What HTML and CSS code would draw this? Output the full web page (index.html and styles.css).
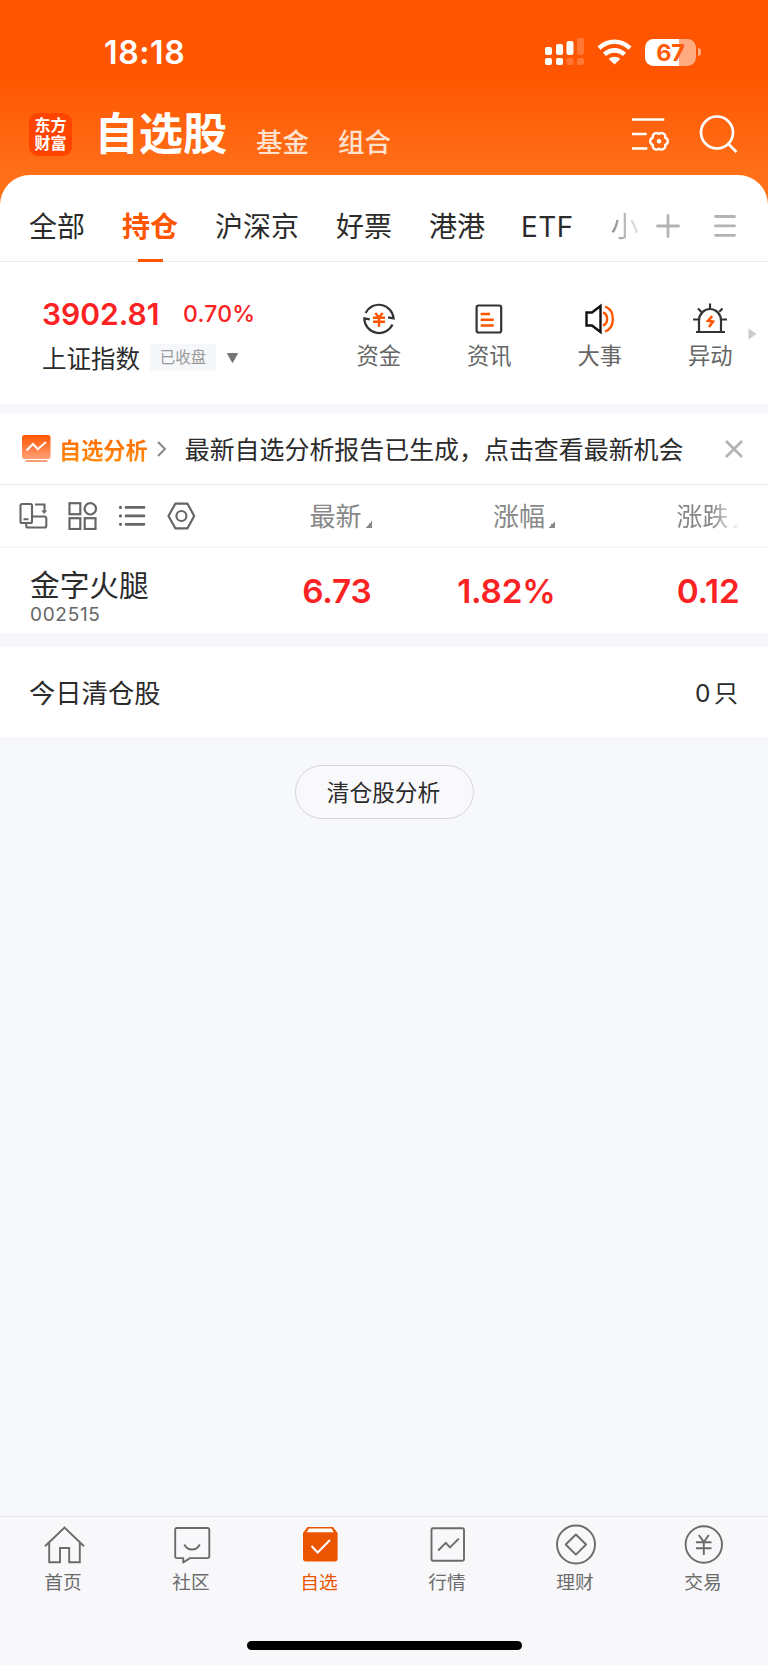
FILE: index.html
```html
<!DOCTYPE html>
<html lang="zh-CN">
<head>
<meta charset="utf-8">
<title>自选股</title>
<link rel="stylesheet" href="styles.css">
</head>
<body>
<div class="app">
  <header class="header">
    <div class="status">
      <span class="time">18:18</span>
      <div class="status-icons">
        <svg class="signal" width="39" height="28" viewBox="0 0 39 28" fill="#fff"><rect x="0" y="9" width="7" height="8" rx="2"/><rect x="11" y="6" width="7" height="11" rx="2"/><rect x="21.500" y="3" width="7" height="14" rx="2"/><rect x="0" y="20" width="7" height="7" rx="2"/><rect x="11" y="20" width="7" height="7" rx="2"/><g opacity=".2"><rect x="32" y="0" width="7" height="17" rx="2"/><rect x="21.500" y="20" width="7" height="7" rx="2"/><rect x="32" y="20" width="7" height="7" rx="2"/></g></svg>
        <svg class="wifi" width="35" height="26" viewBox="0 0 35 26"><g fill="none" stroke="#fff" stroke-width="4.600"><path d="M2 9.200C10.800.600 24.200.600 33 9.200"/><path d="M7.500 15.400c5.800-5.400 14.200-5.400 20 0"/></g><path d="M11.800 19.900c3.300-3 8.100-3 11.400 0l-5.700 5.600z" fill="#fff"/></svg>
        <div class="battery"><span class="cell">67</span><i class="nub"></i></div>
      </div>
    </div>
    <div class="titlebar">
      <div class="logo"><span>东方</span><span>财富</span></div>
      <h1 class="title">自选股</h1>
      <span class="sub">基金</span>
      <span class="sub">组合</span>
      <div class="title-actions">
        <svg width="40" height="40" viewBox="0 0 40 40" fill="none" stroke="#fff" stroke-width="2.700"><path d="M1 5.500h32.300M1 20h14.700M1 34.500h15.300"/><path stroke-width="2.300" stroke-linejoin="round" d="M34.200 30.900A3.800 3.800 0 0 1 28 34.600A3.800 3.800 0 0 1 21.800 30.900A3.800 3.800 0 0 1 21.800 23.700A3.800 3.800 0 0 1 28 20A3.800 3.800 0 0 1 34.200 23.700A3.800 3.800 0 0 1 34.200 30.900z"/><circle cx="28" cy="27.300" r="2.200" fill="#fff" stroke="none"/></svg>
        <svg width="40" height="40" viewBox="0 0 40 40" fill="none" stroke="#fff" stroke-width="2.700"><circle cx="18" cy="18.500" r="16"/><path d="M29.500 30l8 8"/></svg>
      </div>
    </div>
  </header>

  <section class="sheet">
    <nav class="tabs">
      <div class="tab-list"><span>全部</span><span class="active">持仓</span><span>沪深京</span><span>好票</span><span>港港</span><span class="etf">ETF</span><span class="fade">小</span></div>
      <svg class="plus" width="24" height="24" viewBox="0 0 24 24" stroke="#b3b3b3" stroke-width="2.800" stroke-linecap="round"><path d="M1.500 12h21M12 1.500v21"/></svg>
      <svg class="menu" width="22" height="24" viewBox="0 0 22 24" stroke="#b3b3b3" stroke-width="2.800" stroke-linecap="round"><path d="M1.500 2.500h19M1.500 11.900h19M1.500 21.300h19"/></svg>
    </nav>

    <div class="quote">
      <div class="index">
        <div class="index-nums"><b>3902.81</b><span>0.70%</span></div>
        <div class="index-name"><span>上证指数</span><em>已收盘</em><svg width="11" height="10" viewBox="0 0 11 10"><path d="M.500.500h10L5.500 9.500z" fill="#777" stroke="#777" stroke-linejoin="round"/></svg></div>
      </div>
      <div class="quick">
        <div><svg width="36" height="36" viewBox="0 0 36 36" fill="none" stroke="#333" stroke-width="2.200"><path d="M4.600 12A14.800 14.800 0 0 1 32.600 17.300l-5.600-1M31.500 23.500A14.800 14.800 0 0 1 3.300 17.300l5.500 1"/><path stroke="#ff5500" stroke-width="2.400" d="M14.300 12l3.700 4.500 3.700-4.500M12 16.800h12M12 20.800h12M18 16.500v9.300"/></svg>资金</div>
        <div><svg width="36" height="36" viewBox="0 0 36 36" fill="none" stroke="#333" stroke-width="2.200"><rect x="5.600" y="4.500" width="24.600" height="27" rx="2"/><path stroke="#ff5500" stroke-width="2.500" d="M9.700 13h9.300M9.700 18.700h13M9.700 24.500h13"/></svg>资讯</div>
        <div><svg width="36" height="36" viewBox="0 0 36 36" fill="none" stroke="#111" stroke-width="2.400"><path d="M18.500 5v26l-8.500-6.500H4.500V11.500H10z"/><path stroke="#ff5500" d="M21 11.500c5.500 2 5.500 11 0 13M23 5.500c10.500 4 10.500 21 0 25"/></svg>大事</div>
        <div><svg width="36" height="36" viewBox="0 0 36 36" fill="none" stroke="#333" stroke-width="2.200"><path d="M4 31h29M7 31V19.500a11 11.500 0 0 1 22 0V31M18 2.500v5M6 7.500l3.200 3.200M30.500 7.500l-3.200 3.200M1 18.500h5M30 18.500h5"/><path stroke="#ff5500" stroke-width="2.500" d="M20.200 15.200l-4.200 4.600 5 .800-4 5.400"/></svg>异动</div>
      </div>
      <svg class="more" width="9" height="12" viewBox="0 0 9 12"><path d="M.500.500L8.500 6l-8 5.500z" fill="#ccc"/></svg>
    </div>

    <div class="notice">
      <svg width="29" height="28" viewBox="0 0 29 28"><defs><linearGradient id="g" x2="0" y2="1"><stop stop-color="#ff5500"/><stop offset="1" stop-color="#ffa078"/></linearGradient></defs><rect width="28.500" height="24" rx="2.500" fill="url(#g)"/><path d="M4.500 15.500L11 9l4.800 5.200L24 7" fill="none" stroke="#fff" stroke-width="2"/><path d="M4.500 26h20" stroke="#ffa078" stroke-width="2.200" stroke-linecap="round"/></svg>
      <strong>自选分析</strong>
      <svg class="chev" width="10" height="16" viewBox="0 0 10 16" fill="none" stroke="#888" stroke-width="2"><path d="M1 1l7 7-7 7"/></svg>
      <p>最新自选分析报告已生成，点击查看最新机会</p>
      <svg class="close" width="18" height="18" viewBox="0 0 18 18" stroke="#b3b3b3" stroke-width="2.600"><path d="M1 1l16 16M17 1L1 17"/></svg>
    </div>

    <div class="thead">
      <div class="views">
        <svg width="29" height="28" viewBox="0 0 29 28" fill="none" stroke="#666" stroke-width="2.100"><rect x="1.500" y="2" width="11.500" height="19" rx="1.500"/><path d="M4.500 17.200h5M16 2.500h9.500v7M13 14.500h12.500a1.800 1.800 0 0 1 1.800 1.800v7.400a1.800 1.800 0 0 1-1.800 1.800H9a1.800 1.800 0 0 1-1.800-1.800V21"/><path d="M22.300 8.500h5.800l-2.900 3.600z" fill="#666" stroke="none"/></svg>
        <svg width="29" height="28" viewBox="0 0 29 28" fill="none" stroke="#666" stroke-width="2.200"><rect x="1.500" y="1.200" width="10.800" height="11"/><circle cx="22.300" cy="6.800" r="5.700"/><rect x="1.500" y="16.200" width="10.800" height="10.800"/><rect x="16.700" y="16.200" width="10.800" height="10.800"/></svg>
        <svg width="29" height="28" viewBox="0 0 29 28" stroke="#666" stroke-width="2.700" stroke-linecap="round"><path d="M8 5.400h18M8 13.900h18M8 22.300h18"/><path stroke-width="3.200" d="M2.500 5.400h.010M2.500 13.900h.010M2.500 22.300h.010"/></svg>
        <svg width="29" height="28" viewBox="0 0 29 28" fill="none" stroke="#666" stroke-width="2.200" stroke-linejoin="round"><path d="M8.300 1.700h12.200L27.200 14l-6.700 12.300H8.300L1.500 14z"/><circle cx="14.400" cy="14" r="5"/></svg>
      </div>
      <div class="cols"><span>最新<i></i></span><span>涨幅<i></i></span><span class="fadecol">涨跌<i></i></span></div>
    </div>

    <div class="stock">
      <div class="stock-name"><span>金字火腿</span><small>002515</small></div>
      <div class="vals"><b>6.73</b><b>1.82%</b><b>0.12</b></div>
    </div>

    <div class="cleared"><span>今日清仓股</span><span class="count">0<i>只</i></span></div>
  </section>

  <main class="body"><button class="pill">清仓股分析</button></main>

  <footer class="bottom">
    <nav class="bottom-nav">
      <div><svg width="42" height="42" viewBox="0 0 42 42" fill="none" stroke="#6b6b6b" stroke-width="1.900"><path d="M2 22.300L21.500 3.500 41 22.300M6.200 19v19.200h10.800V24h9.200v14.200h10.600V19"/></svg><span>首页</span></div>
      <div><svg width="42" height="42" viewBox="0 0 42 42" fill="none" stroke="#6b6b6b" stroke-width="1.900" stroke-linejoin="round"><path d="M6 4h30.500a1.800 1.800 0 0 1 1.800 1.800v26.500a1.800 1.800 0 0 1-1.800 1.800H19l-6.800 4.400v-4.400H6a1.800 1.800 0 0 1-1.800-1.800V5.800A1.800 1.800 0 0 1 6 4zM13.300 20.500c3.500 6.700 12 6.700 15.500 0"/></svg><span>社区</span></div>
      <div class="on"><svg width="42" height="42" viewBox="0 0 42 42"><path d="M8.500 3h25.500l4.600 6v25.500a3 3 0 0 1-3 3H7a3 3 0 0 1-3-3V9z" fill="#eb5500"/><path d="M10 4.500h22.500l2.300 3.800H7.500z" fill="#fff"/><path d="M12.500 22l6.200 6.500L31 16" fill="none" stroke="#fff" stroke-width="2"/></svg><span>自选</span></div>
      <div><svg width="42" height="42" viewBox="0 0 42 42" fill="none" stroke="#6b6b6b" stroke-width="1.900"><rect x="4.500" y="4.300" width="32.500" height="32.500" rx="1.500"/><path d="M11.200 26.500l7.600-7.600 4.200 4.500 8.800-8.800"/></svg><span>行情</span></div>
      <div><svg width="42" height="42" viewBox="0 0 42 42" fill="none" stroke="#6b6b6b" stroke-width="1.900" stroke-linejoin="round"><circle cx="21" cy="20.500" r="19"/><path d="M20.900 10.500l10.200 10-10.200 10.200-10.200-10.200z"/></svg><span>理财</span></div>
      <div><svg width="42" height="42" viewBox="0 0 42 42" fill="none" stroke="#6b6b6b" stroke-width="1.900"><circle cx="20.800" cy="20.500" r="18.200"/><path d="M15.800 11l5 7 5-7M13 18.300h15.500M13 24.300h15.500M20.800 18v13"/></svg><span>交易</span></div>
    </nav>
    <div class="home"></div>
  </footer>
</div>
</body>
</html>
```
FILE: styles.css
```css
* { box-sizing: border-box; margin: 0; padding: 0; }
body { width: 768px; font-family: Inter, "Noto Sans CJK SC", sans-serif; color: #2b2b2b; background: #f7f8fb; }
svg { display: block; flex: none; }
i, em { font-style: normal; }
span, b, strong, p, em, small { white-space: nowrap; }
.app { height: 1665px; display: flex; flex-direction: column; }

.header { height: 215px; flex: none; background: linear-gradient(#ff5500 0 72px, #ff7019 175px); }
.status { height: 104px; padding: 0 67px 0 104px; display: flex; align-items: center; justify-content: space-between; color: #fff; }
.time { font-size: 32px; font-weight: 600; line-height: 40px; letter-spacing: .600px; padding-top: 2px; }
.status-icons { display: flex; align-items: center; }
.wifi { margin: 0 13px 0 13px; }
.battery { display: flex; align-items: center; gap: 2px; }
.cell { width: 51px; height: 27px; border-radius: 8.500px; background: linear-gradient(90deg, #fff 34px, #ffaa80 34px); color: #ff5a05; font-size: 23.500px; font-weight: 700; line-height: 27px; text-align: center; letter-spacing: -.3px; }
.nub { width: 3px; height: 8px; border-radius: 0 3px 3px 0; background: #ffaa80; }
.titlebar { height: 71px; padding: 0 29px; display: flex; color: #fff; }
.logo { width: 43px; height: 43px; margin-top: 9px; padding-top: 4px; border-radius: 9px; background: #ff4400; display: flex; flex-direction: column; align-items: center; font-size: 16px; font-weight: 700; line-height: 17.500px; }
.title { margin: 1px 29px 0 22.500px; font-size: 44.200px; font-weight: 700; line-height: 58px; }
.sub { margin: 17px 29px 0 0; font-size: 26.500px; font-weight: 500; line-height: 42px; color: #ffe1d0; }
.title-actions { display: flex; gap: 28px; margin: 9.500px 0 0 auto; }

.sheet { flex: none; margin-top: -40px; border-radius: 30px 30px 0 0; background: #fff; }
.tabs { height: 87px; border-bottom: 1px solid #ebebed; display: flex; align-items: center; padding: 16px 32px 0 29px; }
.tab-list { display: flex; gap: 37px; font-size: 28px; line-height: 70px; padding-top: 1px; flex: none; }
.active { color: #ff5500; font-weight: 700; background: linear-gradient(#ff5500, #ff5500) center bottom / 25px 3px no-repeat; }
.etf { font-size: 27.800px; margin-left: -1px; letter-spacing: .5px; }
.fade { background: linear-gradient(90deg, #888, #ddd 85%); background-clip: text; color: transparent; }
.plus { margin-left: auto; }
.menu { margin-left: 34px; }

.quote { height: 151px; border-bottom: 9px solid #f6f7fa; padding: 31px 12px 0 42px; display: flex; }
.index { width: 294px; flex: none; }
.index-nums { display: flex; align-items: center; height: 41px; color: #fa2222; }
.index-nums b { font-size: 30px; font-weight: 600; width: 141px; }
.index-nums span { font-size: 23px; font-weight: 500; letter-spacing: .2px; }
.index-name { display: flex; align-items: center; height: 47px; font-size: 24.500px; }
.index-name em { width: 66px; height: 27px; margin: 0 11px 0 10px; background: #f6f7fa; color: #999; font-size: 15.500px; line-height: 27px; text-align: center; }
.quick { display: flex; flex: none; width: 442px; margin-left: -12.500px; }
.quick div { flex: 1; display: flex; flex-direction: column; align-items: center; margin-top: 8px; font-size: 22.300px; line-height: 38px; color: #666; }
.more { margin: 34.500px 0 0 -17.500px; }

.notice { height: 72px; border-bottom: 1px solid #e8e8ea; display: flex; align-items: center; padding: 1px 25px 0 22px; }
.notice strong { margin: 0 9px 0 8px; font-size: 22.200px; font-weight: 700; background: linear-gradient(#ff6600, #ff8f10); background-clip: text; color: transparent; }
.notice p { margin-left: 18px; font-size: 24.950px; line-height: 40px; padding-top: 1px; }
.close { margin-left: auto; }

.thead { height: 63px; border-bottom: 2px solid #f6f7fa; display: flex; align-items: center; padding-left: 18.500px; }
.views { display: flex; gap: 20.500px; width: 291px; }
.cols { display: flex; gap: 120px; font-size: 26px; color: #888; line-height: 50px; padding-top: 3px; }
.cols span { display: flex; width: 63.500px; align-items: flex-end; }
.cols i { width: 7px; height: 7px; margin: 0 0 14px 3px; background: linear-gradient(135deg, transparent 50%, #888 50%); }
.fadecol { -webkit-mask-image: linear-gradient(90deg, #000 55%, transparent); mask-image: linear-gradient(90deg, #000 55%, transparent); }

.stock { height: 99px; border-bottom: 14px solid #f6f7fa; padding: 0 28.500px 0 30px; display: flex; justify-content: space-between; }
.stock-name { display: flex; flex-direction: column; padding-top: 16px; }
.stock-name span { font-size: 29.700px; line-height: 42px; }
.stock-name small { font-size: 19px; line-height: 17px; letter-spacing: .7px; color: #666; }
.vals { display: grid; grid-template-columns: 100px 184px 184px; text-align: right; line-height: 86px; }
.vals b { font-size: 33.300px; font-weight: 600; letter-spacing: -.2px; color: #fa2222; }

.cleared { height: 90px; display: flex; align-items: center; justify-content: space-between; padding: 0 30px 2px 29px; font-size: 26.300px; }
.count { font-size: 24.500px; }
.count i { font-size: 24px; margin-left: 3.500px; }

.body { flex: 1; display: flex; justify-content: center; align-items: flex-start; padding-top: 28px; }
.pill { width: 179px; height: 54px; border: 1.500px solid #d4d5d8; border-radius: 27px; background: #f9f9fb; color: #2b2b2b; font-family: inherit; font-size: 22.700px; padding: 0 1px 2px 0; }

.bottom { flex: none; height: 149px; border-top: 1px solid #e9e9ec; background: #f8f8fb; display: flex; flex-direction: column; align-items: center; }
.bottom-nav { width: 768px; height: 124px; display: flex; padding-top: 7px; }
.bottom-nav div { flex: 1; display: flex; flex-direction: column; align-items: center; color: #6b6b6b; font-size: 18.700px; line-height: 33px; }
.bottom-nav span { padding-right: 2px; }
.bottom-nav div.on { color: #eb5500; }
.home { width: 275px; height: 9px; border-radius: 5px; background: #000; }
```
